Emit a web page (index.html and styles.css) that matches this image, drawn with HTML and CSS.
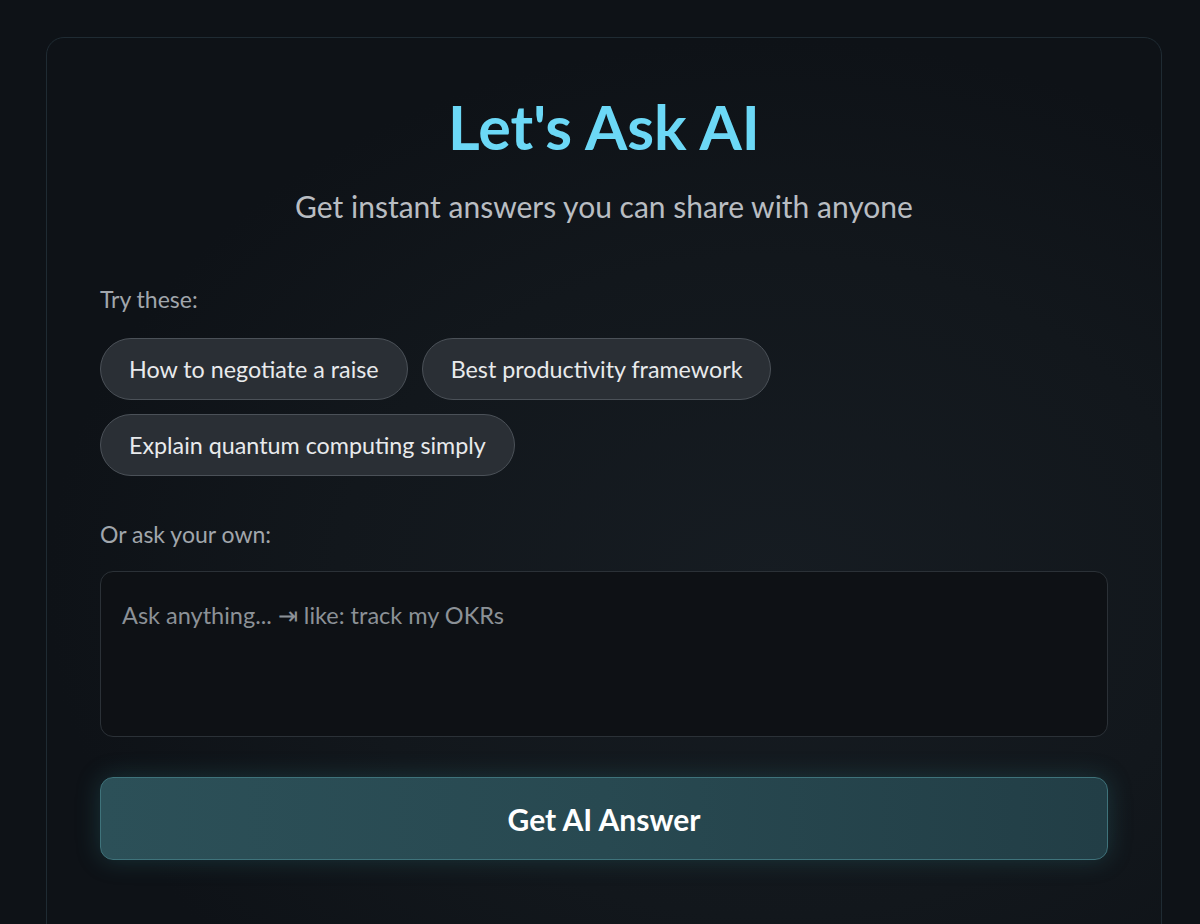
FILE: index.html
```html
<!DOCTYPE html>
<html lang="en">
<head>
<meta charset="utf-8">
<title>Let's Ask AI</title>
<link rel="stylesheet" href="styles.css">
</head>
<body>
<main class="card">
  <h1 class="title">Let's Ask AI</h1>
  <p class="subtitle">Get instant answers you can share with anyone</p>
  <section class="suggest">
    <div class="label">Try these:</div>
    <div class="chips">
      <button class="chip">How to negotiate a raise</button>
      <button class="chip">Best productivity framework</button>
      <button class="chip">Explain quantum computing simply</button>
    </div>
  </section>
  <section class="own">
    <div class="label">Or ask your own:</div>
    <textarea class="ask" placeholder="Ask anything... ⇥ like: track my OKRs"></textarea>
  </section>
  <button class="submit">Get AI Answer</button>
</main>
</body>
</html>
```

FILE: styles.css
```css
* { box-sizing: border-box; }
html, body { height: 100%; }
body {
  margin: 0;
  background: #0e1217;
  font-family: "Lato", "Noto Sans", sans-serif;
  color: #e6e8ea;
  padding: 37px 38px 0 46px;
  overflow: hidden;
}
.card {
  min-height: 1000px;
  border: 1px solid #1f2b33;
  border-radius: 18px;
  background: radial-gradient(ellipse 65% 55% at 65% 55%, #161c22 0%, #12171c 60%, #0e1217 100%);
  padding: 49px 53px 60px 53px;
  display: flex;
  flex-direction: column;
}
.title {
  margin: 0;
  text-align: center;
  font-size: 61px;
  font-weight: 700;
  color: #6cd8f6;
  line-height: 80px;
}
.subtitle {
  margin: 20px 0 0;
  text-align: center;
  font-size: 30px;
  color: #b9bdc2;
  line-height: 38px;
}
.suggest { margin-top: 60px; }
.label {
  font-size: 23px;
  color: #a1a6ac;
  line-height: 28px;
}
.chips {
  margin-top: 25px;
  display: flex;
  flex-wrap: wrap;
  gap: 14px 14px;
  max-width: 700px;
}
.chip {
  height: 62px;
  padding: 0 28px;
  border-radius: 31px;
  border: 1px solid #4b5158;
  background: #2a2f35;
  color: #e8eaec;
  font-family: inherit;
  font-size: 23.3px;
}
.own { margin-top: 44px; }
.ask {
  display: block;
  width: 100%;
  height: 166px;
  margin-top: 23px;
  resize: none;
  border: 1px solid #2b3137;
  border-radius: 13px;
  background: #0e1115;
  padding: 29px 21px;
  font-family: inherit;
  font-size: 23.5px;
  color: #e6e8ea;
  outline: none;
}
.ask::placeholder { color: #8c9197; }
.submit {
  margin-top: 40px;
  height: 83px;
  width: 100%;
  border-radius: 13px;
  border: 1px solid #3f737b;
  background: linear-gradient(90deg, #2c5058 0%, #284951 50%, #223e46 100%);
  box-shadow: 0 0 24px rgba(60, 150, 160, 0.25);
  color: #ffffff;
  font-family: inherit;
  font-size: 30px;
  font-weight: 700;
}
```
